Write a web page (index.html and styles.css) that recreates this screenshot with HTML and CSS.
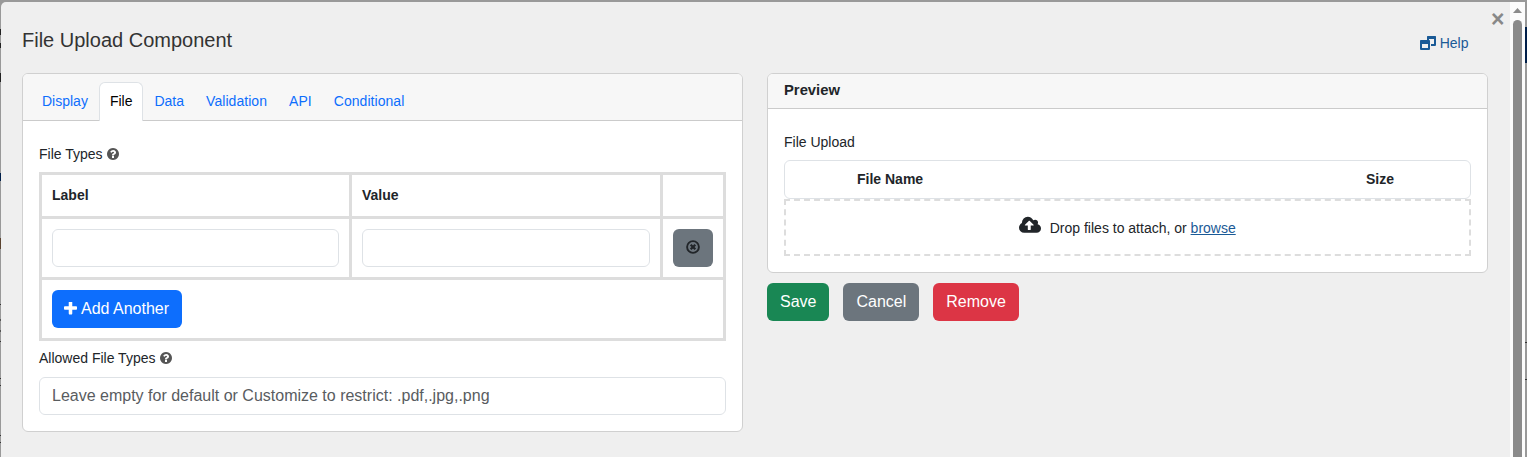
FILE: index.html
```html
<!DOCTYPE html>
<html lang="en">
<head>
<meta charset="utf-8">
<title>File Upload Component</title>
<link rel="stylesheet" href="styles.css">
</head>
<body>
<svg class="sprite" aria-hidden="true">
  <symbol id="i-help" viewBox="128 128 1536 1536"><path d="M1024 1376v-192q0-14-9-23t-23-9h-192q-14 0-23 9t-9 23v192q0 14 9 23t23 9h192q14 0 23-9t9-23zm256-672q0-88-55.500-163t-138.500-116-170-41q-243 0-371 213-15 24 8 42l132 100q7 6 19 6 16 0 25-12 53-68 86-92 34-24 86-24 48 0 85.500 26t37.500 59q0 38-20 61t-68 45q-63 28-115.500 86.500t-52.500 125.500v36q0 14 9 23t23 9h192q14 0 23-9t9-23q0-19 21.500-49.500t54.500-49.500q32-18 49-28.500t46-35 44.500-48 28-60.500 12.500-81zm384 192q0 209-103 385.500t-279.500 279.500-385.500 103-385.500-103-279.500-279.500-103-385.500 103-385.500 279.500-279.500 385.500-103 385.500 103 279.500 279.500 103 385.500z"/></symbol>
  <symbol id="i-remove" viewBox="0 0 14 14"><circle cx="7" cy="7" r="5.900" fill="none" stroke="currentColor" stroke-width="1.900"/><path fill="none" stroke="currentColor" stroke-width="2.200" d="M4.700 4.700l4.600 4.600M9.300 4.700L4.700 9.300"/></symbol>
  <symbol id="i-plus" viewBox="192 192 1408 1408"><path d="M1600 736v192q0 40-28 68t-68 28h-416v416q0 40-28 68t-68 28h-192q-40 0-68-28t-28-68v-416h-416q-40 0-68-28t-28-68v-192q0-40 28-68t68-28h416v-416q0-40 28-68t68-28h192q40 0 68 28t28 68v416h416q40 0 68 28t28 68z"/></symbol>
  <symbol id="i-cloud" viewBox="0 0 1920 1792"><path d="M1280 864q0-14-9-23l-352-352q-9-9-23-9t-23 9l-351 351q-10 12-10 24 0 14 9 23t23 9h224v352q0 13 9.500 22.500t22.500 9.500h192q13 0 22.500-9.500t9.500-22.500v-352h224q13 0 22.500-9.500t9.500-22.500zm640 288q0 159-112.500 271.500t-271.500 112.500h-1088q-185 0-316.500-131.500t-131.500-316.500q0-130 70-240t188-165q-2-30-2-43 0-212 150-362t362-150q156 0 285.500 87t188.500 231q71-62 166-62 106 0 181 75t75 181q0 76-41 138 130 31 213.500 135.500t83.500 238.500z"/></symbol>
</svg>
<div class="dialog">
  <main class="content">
    <header class="top">
      <h1 class="title">File Upload Component</h1>
      <a class="help">
        <svg class="help-icon" viewBox="0 0 17 14"><path fill="none" stroke="currentColor" stroke-width="2" stroke-linejoin="round" d="M8 4V1h7v8h-4"/><path fill="currentColor" d="M7 .5h9V3H7z"/><path fill="none" stroke="currentColor" stroke-width="2" stroke-linejoin="round" d="M1 5h8v8H1z"/><path fill="currentColor" d="M.5 4.500h9V8h-9z"/></svg>
        <span>Help</span>
      </a>
    </header>
    <div class="columns">
      <section class="card settings">
        <nav class="tabs">
          <a class="tab">Display</a><a class="tab active">File</a><a class="tab">Data</a><a class="tab">Validation</a><a class="tab">API</a><a class="tab">Conditional</a>
        </nav>
        <div class="settings-body">
          <div class="label">File Types <svg class="tip"><use href="#i-help"/></svg></div>
          <div class="grid">
            <div class="cell head">Label</div><div class="cell head">Value</div><div class="cell head"></div>
            <div class="cell"><input class="field" type="text"></div>
            <div class="cell"><input class="field" type="text"></div>
            <div class="cell"><button class="btn gray square"><svg class="remove-icon"><use href="#i-remove"/></svg></button></div>
            <div class="cell wide"><button class="btn blue"><svg class="plus-icon"><use href="#i-plus"/></svg>Add Another</button></div>
          </div>
          <div class="label second">Allowed File Types <svg class="tip"><use href="#i-help"/></svg></div>
          <input class="field" type="text" placeholder="Leave empty for default or Customize to restrict: .pdf,.jpg,.png">
        </div>
      </section>
      <div class="side">
        <section class="card preview">
          <h2 class="preview-head">Preview</h2>
          <div class="preview-body">
            <div class="label">File Upload</div>
            <div class="file-list"><span class="name">File Name</span><span class="size">Size</span></div>
            <div class="drop"><svg class="cloud"><use href="#i-cloud"/></svg><span>Drop files to attach, or <a class="browse">browse</a></span></div>
          </div>
        </section>
        <div class="actions">
          <button class="btn green">Save</button><button class="btn gray">Cancel</button><button class="btn red">Remove</button>
        </div>
      </div>
    </div>
    <span class="close">×</span>
  </main>
  <div class="scrollbar"><i class="arrow"></i><i class="thumb"></i></div>
</div>
</body>
</html>
```

FILE: styles.css
```css
* { box-sizing: border-box; }
body {
  margin: 0;
  height: 457px;
  padding: 2px 2px 0 1px;
  overflow: hidden;
  font: 14px/21px "Liberation Sans", Arial, sans-serif;
  color: #212529;
  background:
    linear-gradient(#001f49, #001f49) 1525px 27px / 2px 36px no-repeat,
    linear-gradient(#222, #222) 0 29px / 1px 6px no-repeat,
    linear-gradient(#222, #222) 0 43px / 1px 5px no-repeat,
    linear-gradient(#222, #222) 0 73px / 1px 9px no-repeat,
    linear-gradient(#001f49, #001f49) 0 173px / 1px 8px no-repeat,
    linear-gradient(#5a4330, #5a4330) 0 238px / 1px 11px no-repeat,
    linear-gradient(#333, #333) 0 304px / 1px 1px no-repeat,
    linear-gradient(#555, #555) 0 319px / 1px 2px no-repeat,
    linear-gradient(#555, #555) 0 330px / 1px 2px no-repeat,
    linear-gradient(#333, #333) 0 341px / 1px 1px no-repeat,
    linear-gradient(#333, #333) 0 378px / 1px 1px no-repeat,
    linear-gradient(#333, #333) 0 385px / 1px 1px no-repeat,
    linear-gradient(#333, #333) 0 435px / 1px 1px no-repeat,
    linear-gradient(#333, #333) 0 442px / 1px 1px no-repeat,
    linear-gradient(#333, #333) 1525px 342px / 2px 1px no-repeat,
    linear-gradient(#333, #333) 1525px 379px / 2px 1px no-repeat,
    #999;
}
.sprite { position: absolute; width: 0; height: 0; }
svg { fill: currentColor; }
.dialog { display: flex; height: 455px; overflow: hidden; background: #efefef; border-radius: 5px 0 0 0; }
.content { position: relative; width: 1509px; padding: 0 22px 0 21px; }
.top { display: flex; justify-content: space-between; height: 71px; }
.title { margin: 26px 0 0; font-size: 20px; line-height: 24px; font-weight: 400; color: #333; }
.help { display: flex; gap: 3px; height: 21px; margin: 31px 19.5px 0 0; color: #1a5a96; }
.help-icon { width: 17px; height: 14px; margin-top: 3px; overflow: visible; }
.close { position: absolute; left: 1490px; top: 5px; font-size: 23px; line-height: 24px; font-weight: 700; color: #888; }
.columns { display: flex; gap: 24px; align-items: flex-start; }
.card { width: 721px; border: 1px solid #d0d0d0; border-radius: 6px; background: #fff; overflow: hidden; }
.settings { height: 359px; }
.tabs { display: flex; align-items: flex-end; height: 47px; padding-left: 8px; background: #f7f7f7; box-shadow: inset 0 -1px #cbcbcb; }
.tab { height: 39px; padding: 8px 10px; border: 1px solid transparent; border-bottom: 0; border-radius: 6px 6px 0 0; color: #0d6efd; }
.tab:nth-child(n+4) { letter-spacing: .05px; }
.tab.active { background: #fff; border-color: #dee2e6; color: #000; }
.settings-body { padding: 23px 16px 0; }
.label { height: 21px; }
.label.second { margin: 7px 0 8px; }
.tip { width: 12px; height: 12px; vertical-align: -1px; margin-left: .5px; color: #555; }
.grid { display: grid; grid-template-columns: 307px 308px 60px; grid-template-rows: 41px 58px 58px; gap: 3px; margin-top: 7px; padding: 3px; background: #ddd; }
.cell { padding: 10px; background: #fff; }
.cell.head { font-weight: 700; }
.cell.wide { grid-column: 1 / 4; }
.field { display: block; width: 100%; height: 38px; padding: 6px 12px; border: 1px solid #dee2e6; border-radius: 6px; font: 16px/24px "Liberation Sans", Arial, sans-serif; color: #212529; background: #fff; }
.field::placeholder { color: #595c5f; opacity: 1; }
.btn { display: flex; align-items: center; height: 38px; padding: 0 13px 1px; border: 0; border-radius: 6px; font: 16px/24px "Liberation Sans", Arial, sans-serif; color: #fff; white-space: nowrap; }
.blue { padding-left: 12px; background: #0d6efd; }
.gray { background: #6c757d; }
.green { background: #198754; }
.red { background: #dc3545; }
.btn.square { width: 40px; padding: 0 0 2px; justify-content: center; color: #212529; }
.remove-icon { width: 14px; height: 14px; }
.plus-icon { width: 13px; height: 13px; margin: 0 4px 1px 0; }
.preview { height: 200px; }
.preview-head { height: 35px; margin: 0; padding: 6px 16px 5px; border-bottom: 1px solid #cbcbcb; background: #f7f7f7; font-size: 14.8px; line-height: 21px; }
.preview-body { padding: 23px 16px 0; }
.file-list { display: flex; height: 39px; margin-top: 7px; padding: 8px 0 0 72px; border: 1px solid #dee2e6; border-radius: 6px; font-weight: 700; }
.name { width: 509px; }
.drop { display: flex; justify-content: center; height: 57px; padding-top: 17px; border: 2px dashed #ddd; }
.cloud { width: 22px; height: 21px; margin: -3px 8.5px 0 0; }
.browse { color: #1a5a96; text-decoration: underline; }
.actions { display: flex; gap: 14px; margin-top: 10px; }
.scrollbar { width: 15px; background: #fcfcfc; padding: 6px 3px 0; }
.arrow { display: block; width: 9px; height: 5px; background: #8b8b8b; clip-path: polygon(50% 0, 100% 100%, 0 100%); }
.thumb { display: block; width: 9px; height: 460px; margin-top: 7px; border-radius: 5px; background: #8b8b8b; }
```
